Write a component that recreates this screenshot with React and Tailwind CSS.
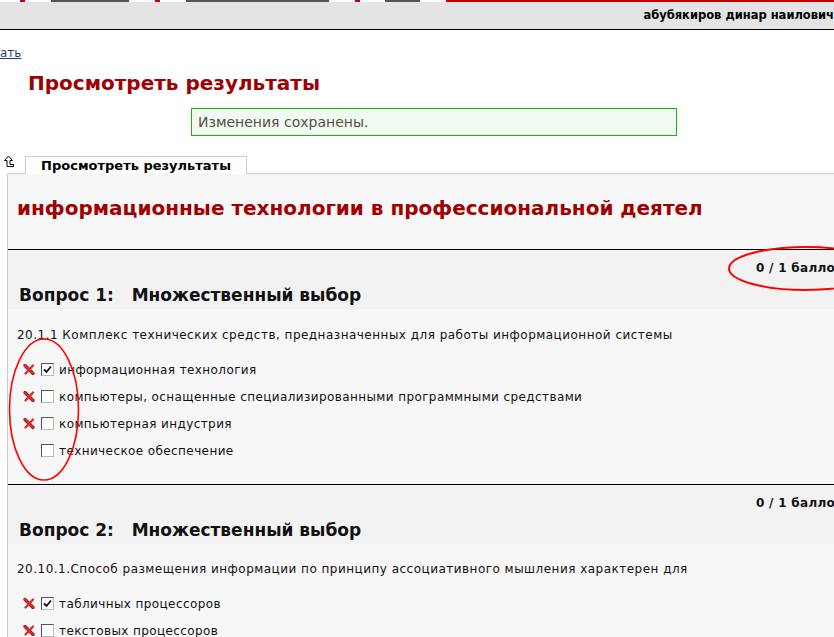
import React from "react";

const XMark = () => (
  <svg width="12" height="11" viewBox="0 0 12 11" className="shrink-0">
    <path d="M2 1.5 L10 9.5" stroke="#8c1414" strokeWidth="3.2" strokeLinecap="round" />
    <path d="M10 1.5 L2.5 9.5" stroke="#d42a2a" strokeWidth="2.2" strokeLinecap="round" />
    <path d="M2 1.5 L10 9.5" stroke="#e03030" strokeWidth="1.8" strokeLinecap="round" />
  </svg>
);

const Checkbox = ({ checked }) => (
  <span className="w-[13px] h-[13px] shrink-0 bg-white border border-t-[#555] border-l-[#555] border-b-[#bbb] border-r-[#bbb] flex items-center justify-center">
    {checked && (
      <svg width="9" height="9" viewBox="0 0 9 9">
        <path d="M1 4.5 L3.5 7 L8 1.5" fill="none" stroke="#111" strokeWidth="1.8" />
      </svg>
    )}
  </span>
);

const Option = ({ wrong, checked, text }) => (
  <div className="flex items-center h-[27px] pl-[15px]">
    <span className="w-[18px] flex">{wrong && <XMark />}</span>
    <Checkbox checked={checked} />
    <span className="ml-[5px] text-[12px] tracking-[0.4px] text-[#111] whitespace-nowrap">{text}</span>
  </div>
);

const Question = ({ num, text, options, textPad, bottomPad }) => (
  <div className="border-t border-black">
    <div className="bg-[#f2f2f2] h-[59px] flex flex-col">
      <div className="text-right pr-[12px] pt-[9px] text-[12px] font-bold tracking-[0.3px] text-[#111] whitespace-nowrap">0 / 1 баллов</div>
      <div className="pl-[11px] pt-[6px] text-[17px] font-bold text-[#111] whitespace-nowrap">
        Вопрос {num}:&nbsp;&nbsp; Множественный выбор
      </div>
    </div>
    <div className={`pl-[9px] text-[12px] tracking-[0.48px] text-[#111] whitespace-nowrap ${textPad}`}>{text}</div>
    <div className={`pt-[12px] ${bottomPad}`}>
      {options.map((o, i) => (
        <Option key={i} {...o} />
      ))}
    </div>
  </div>
);

export default function App() {
  const strip = [
    ["w-[20px]", "bg-white"],
    ["w-[5px]", "bg-[#cc0000]"],
    ["w-[26px]", "bg-white"],
    ["w-[78px]", "bg-[#555]"],
    ["w-[26px]", "bg-white"],
    ["w-[5px]", "bg-[#cc0000]"],
    ["w-[26px]", "bg-white"],
    ["w-[143px]", "bg-[#555]"],
    ["w-[26px]", "bg-white"],
    ["w-[5px]", "bg-[#cc0000]"],
    ["w-[25px]", "bg-white"],
    ["w-[35px]", "bg-[#555]"],
    ["w-[26px]", "bg-white"],
    ["flex-1", "bg-[#cc0000]"],
  ];

  return (
    <div className="relative w-[834px] h-[637px] overflow-hidden bg-white font-['DejaVu_Sans',sans-serif]">
      {/* top strip */}
      <div className="flex h-[2px]">
        {strip.map(([w, c], i) => (
          <div key={i} className={`${w} ${c}`} />
        ))}
      </div>
      <div className="h-[28px] bg-[#e4e4e4] border-b border-black flex items-center justify-end">
        <span className="text-[11.5px] font-bold text-black whitespace-nowrap">
          абубякиров динар наилович
        </span>
      </div>

      <div className="pt-[15px] text-[12px] leading-[16px]">
        <a className="text-[#1f3f73] underline">ать</a>
      </div>

      <h1 className="pl-[28px] pt-[9px] text-[20px] leading-[26px] font-bold text-[#a00000] whitespace-nowrap">
        Просмотреть результаты
      </h1>

      <div className="mt-[12px] ml-[191px] w-[486px] h-[28px] border border-[#22aa22] bg-[#f0faf0] flex items-center pl-[6px] text-[14px] text-[#555048]">
        Изменения сохранены.
      </div>

      <div className="flex items-end mt-[19px] h-[18px]">
        <svg width="11" height="13" viewBox="0 0 11 13" className="ml-[4px] mb-[5px]">
          <path d="M0.5 5.5 L4.5 1 L8.5 5.5 H6 V9.5 H9.5 V11.5 H3 V5.5 Z" fill="white" stroke="black" strokeWidth="1" />
        </svg>
        <div className="relative z-10 ml-[10px] -mb-px w-[222px] h-[18px] border border-b-0 border-[#ccc] bg-white text-center text-[13px] leading-[17px] font-bold text-black">
          Просмотреть результаты
        </div>
      </div>

      <div className="ml-[7px] w-[848px] border-l border-t border-[#ccc] bg-[#f7f7f7]">
        <div className="h-[75px] pl-[9px] pt-[21px] text-[20px] leading-[26px] font-bold text-[#a00000] whitespace-nowrap">
          информационные технологии в профессиональной деятел
        </div>
        <Question
          num={1}
          textPad="pt-[17px]"
          bottomPad="pb-[20px]"
          text="20.1.1 Комплекс технических средств, предназначенных для работы информационной системы"
          options={[
            { wrong: true, checked: true, text: "информационная технология" },
            { wrong: true, checked: false, text: "компьютеры, оснащенные специализированными программными средствами" },
            { wrong: true, checked: false, text: "компьютерная индустрия" },
            { wrong: false, checked: false, text: "техническое обеспечение" },
          ]}
        />
        <Question
          num={2}
          textPad="pt-[16px]"
          bottomPad="pb-[20px]"
          text="20.10.1.Способ размещения информации по принципу ассоциативного мышления характерен для"
          options={[
            { wrong: true, checked: true, text: "табличных процессоров" },
            { wrong: true, checked: false, text: "текстовых процессоров" },
          ]}
        />
      </div>

      {/* red annotation ellipses */}
      <svg className="absolute left-0 top-0 pointer-events-none" width="834" height="637">
        <ellipse cx="806" cy="268.5" rx="77" ry="21.5" fill="none" stroke="#ff0000" strokeWidth="2" />
        <ellipse cx="44" cy="409.5" rx="34.5" ry="70.5" fill="none" stroke="#ff0000" strokeWidth="1.6" />
      </svg>
    </div>
  );
}
